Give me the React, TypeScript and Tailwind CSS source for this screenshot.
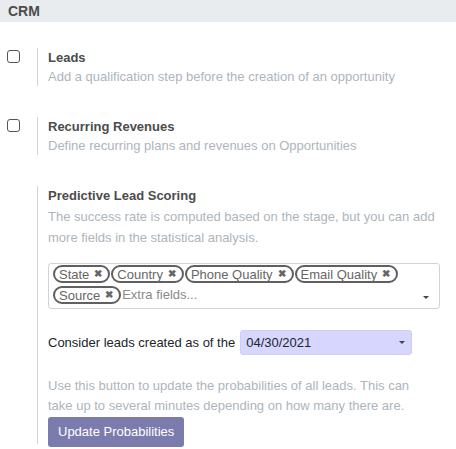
import React from 'react';

const tags = ['State', 'Country', 'Phone Quality', 'Email Quality', 'Source'];

function Caret() {
  return <span className="inline-block w-0 h-0 border-l-[3px] border-r-[3px] border-t-[3px] border-l-transparent border-r-transparent border-t-[#444]" />;
}

function Checkbox() {
  return <span className="block w-[13px] h-[13px] rounded-[3px] border-[1.5px] border-[#555] bg-white" />;
}

function Setting({
  checkbox,
  title,
  children,
  className = '',
}: {
  checkbox?: boolean;
  title: string;
  children: React.ReactNode;
  className?: string;
}) {
  return (
    <div className={`flex ${className}`}>
      <div className="w-[37px] shrink-0 pl-[7px] pt-[2px]">{checkbox && <Checkbox />}</div>
      <div className="flex-1 border-l border-[#ced4da] pl-[10px] pr-4">
        <div className="font-bold text-[#4c4c4c] leading-[20px]">{title}</div>
        {children}
      </div>
    </div>
  );
}

export default function App() {
  return (
    <div className="w-[456px] h-[449px] bg-white overflow-hidden text-[13px] font-['Liberation_Sans',Arial,sans-serif] text-[#212529]">
      <div className="h-[22px] bg-[#e9ecef] px-2 font-bold text-[14px] leading-[22px] text-[#4c4c4c]">CRM</div>

      <Setting checkbox title="Leads" className="mt-[26px]">
        <div className="text-[#adb5bd] leading-[18px]">Add a qualification step before the creation of an opportunity</div>
      </Setting>

      <Setting checkbox title="Recurring Revenues" className="mt-[31px]">
        <div className="text-[#adb5bd] leading-[18px]">Define recurring plans and revenues on Opportunities</div>
      </Setting>

      <Setting title="Predictive Lead Scoring" className="mt-[31px] h-[258px]">
        <div className="text-[#adb5bd] leading-[21px]">
          The success rate is computed based on the stage, but you can add more fields in the statistical analysis.
        </div>
        <div className="mt-[15px] relative h-[46px] border border-[#ced4da] rounded-[3px] pl-[4px] pt-[1px] pr-6">
          <div className="flex flex-wrap gap-y-[3px] gap-x-[1px]">
            {tags.map((t) => (
              <span
                key={t}
                className="inline-flex items-center h-[18px] pl-[4px] pr-[6px] rounded-full border-2 border-[#606060] text-[#666] leading-none gap-[5px]"
              >
                {t}
                <span className="text-[10px] font-bold">✖</span>
              </span>
            ))}
            <span className="h-[18px] leading-[18px] text-[#8a8a8a]">Extra fields...</span>
          </div>
          <span className="absolute right-[10px] bottom-[9px] flex"><Caret /></span>
        </div>
        <div className="mt-[21px] flex items-center">
          <span>Consider leads created as of the</span>
          <div className="ml-[5px] w-[172px] h-[25px] bg-[#d6d6ff] rounded-[3px] border border-[#cfd0ea] flex items-center justify-between pl-[5px] pr-[6px]">
            <span>04/30/2021</span>
            <Caret />
          </div>
        </div>
        <div className="mt-[21px] max-w-[372px] text-[#adb5bd] leading-[20px]">
          Use this button to update the probabilities of all leads. This can take up to several minutes depending on how many there are.
        </div>
        <button className="mt-[1px] h-[30px] px-[10px] bg-[#7c7bad] text-white rounded-[3px] text-[13px]">Update Probabilities</button>
      </Setting>
    </div>
  );
}
